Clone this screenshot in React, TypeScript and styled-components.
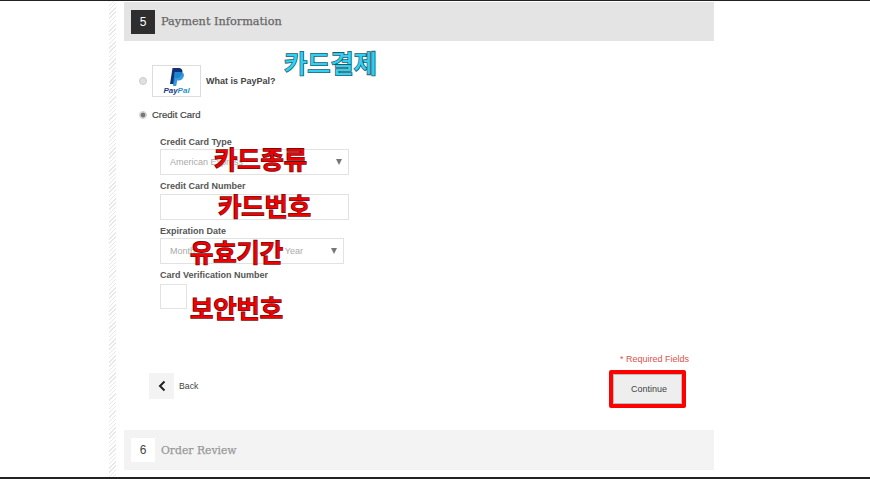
import styled, { createGlobalStyle } from "styled-components";

const GlobalStyle = createGlobalStyle`
  html, body {
    margin: 0;
    padding: 0;
    background: #fff;
  }
  body {
    font-family: "Liberation Sans", Arial, sans-serif;
    overflow: hidden;
  }
`;

const Page = styled.div`
  width: 870px;
  height: 479px;
  box-sizing: border-box;
  border-top: 1px solid #222;
  border-bottom: 2px solid #222;
  padding-left: 109px;
  display: flex;
  overflow: hidden;
`;

const Stripe = styled.div`
  width: 7px;
  margin-right: 8px;
  background: repeating-linear-gradient(135deg, #e8e8e8 0, #e8e8e8 1px, #fff 1px, #fff 3px);
`;

const Main = styled.main`
  position: relative;
  width: 590px;
  padding-top: 1px;
`;

const StepHeader = styled.div<{ $active?: boolean }>`
  height: ${({ $active }) => ($active ? 39 : 40)}px;
  box-sizing: border-box;
  padding-left: 7px;
  display: flex;
  align-items: center;
  gap: 6px;
  background: ${({ $active }) => ($active ? "#e4e4e4" : "#f3f3f3")};
`;

const StepNumber = styled.span<{ $active?: boolean }>`
  width: 24px;
  height: 24px;
  display: flex;
  align-items: center;
  justify-content: center;
  font-size: 12px;
  color: ${({ $active }) => ($active ? "#fff" : "#444")};
  background: ${({ $active }) => ($active ? "#2e2e2e" : "#fff")};
`;

const StepTitle = styled.span<{ $active?: boolean }>`
  font-family: "DejaVu Serif", serif;
  font-size: ${({ $active }) => ($active ? 11.3 : 10.8)}px;
  color: ${({ $active }) => ($active ? "#666" : "#999")};
  -webkit-text-stroke: 0.25px currentColor;
`;

const Body = styled.div`
  height: 389px;
  padding: 24px 0 0 15px;
  box-sizing: border-box;
`;

const PaymentRow = styled.div`
  display: flex;
  align-items: center;
  gap: 5px;
  font-size: 9px;
  font-weight: bold;
  color: #444;
`;

const CardRow = styled(PaymentRow)`
  margin-top: 12px;
  font-weight: normal;
  font-size: 9.5px;
  -webkit-text-stroke: 0.2px #444;
`;

const Radio = styled.span<{ $checked?: boolean }>`
  width: 6px;
  height: 6px;
  border-radius: 50%;
  border: 1px solid #ccc;
  background: ${({ $checked }) => ($checked ? "radial-gradient(circle, #777 0, #777 2px, #eee 3px)" : "#e0e0e0")};
`;

const LogoBox = styled.span`
  width: 47px;
  height: 30px;
  border: 1px solid #ddd;
  display: flex;
  flex-direction: column;
  align-items: center;
`;

const LogoText = styled.span`
  font-size: 8px;
  font-weight: bold;
  font-style: italic;
  line-height: 7px;
  margin-top: 1px;
  color: #1b3c80;
`;

const LogoTextLight = styled.span`
  color: #2a8fd0;
`;

const Form = styled.div`
  padding: 17px 0 0 21px;
`;

const FieldLabel = styled.label`
  display: block;
  font-size: 9px;
  line-height: 11px;
  font-weight: bold;
  color: #555;
  margin-bottom: 2px;
`;

const Field = styled.div`
  margin-bottom: 6px;
`;

const Select = styled.div<{ $width: number }>`
  width: ${({ $width }) => $width}px;
  height: 26px;
  margin: -1px 0 1px;
  box-sizing: border-box;
  border: 1px solid #e2e2e2;
  padding: 0 9px;
  display: flex;
  align-items: center;
  justify-content: space-between;
  font-size: 9px;
  color: #aaa;
`;

const Caret = styled.span`
  width: 0;
  height: 0;
  border-left: 3px solid transparent;
  border-right: 3px solid transparent;
  border-top: 6px solid #777;
  margin-right: -3px;
`;

const Input = styled.div<{ $width: number }>`
  width: ${({ $width }) => $width}px;
  height: 26px;
  box-sizing: border-box;
  border: 1px solid #e2e2e2;
`;

const ExpiryValues = styled.span`
  display: flex;
  width: 133px;
  justify-content: space-between;
`;

const CvvInput = styled(Input)`
  height: 25px;
  margin-top: 3px;
`;

const Required = styled.div`
  position: absolute;
  top: 353px;
  right: 25px;
  font-size: 9px;
  color: #d9534f;
`;

const Actions = styled.div`
  position: absolute;
  top: 369px;
  left: 25px;
  width: 537px;
  display: flex;
  align-items: flex-start;
  justify-content: space-between;
`;

const BackLink = styled.div`
  margin-top: 3px;
  display: flex;
  align-items: center;
  gap: 5px;
  font-size: 8.7px;
  color: #444;
`;

const BackButton = styled.span`
  width: 25px;
  height: 26px;
  display: flex;
  align-items: center;
  justify-content: center;
  background: #f3f3f3;
`;

const ContinueButton = styled.button`
  width: 77px;
  height: 38px;
  box-sizing: border-box;
  border: 4px solid #f00;
  border-radius: 2px;
  outline: none;
  background: #eee;
  box-shadow: inset 0 0 0 1px #bbb;
  font-family: "Liberation Sans", Arial, sans-serif;
  font-size: 9px;
  color: #444;
  padding: 0 0 0 3px;
`;

const Note = styled.span<{ $x: number; $y: number; $cyan?: boolean }>`
  position: absolute;
  left: ${({ $x }) => $x}px;
  top: ${({ $y }) => $y}px;
  font-family: "Noto Sans CJK KR", sans-serif;
  font-size: 25.3px;
  line-height: 30px;
  font-weight: 500;
  white-space: nowrap;
  color: ${({ $cyan }) => ($cyan ? "#2fd0f2" : "#f00000")};
  -webkit-text-stroke: 1.6px ${({ $cyan }) => ($cyan ? "#1d5a6a" : "#7a0a0a")};
  paint-order: stroke fill;
`;

function PayPalMark() {
  return (
    <svg width="14" height="18" viewBox="0 0 14 18" style={{ marginTop: 2 }}>
      <path d="M2.500 0H8c3.500 0 5 2 4.300 4.800C11.500 8.500 9 10 6.500 10H5L3.800 16H0z" fill="#12307a" />
      <path d="M4.500 4h5.500c3 0 4.500 1.500 3.800 4.300-.7 2.800-2.800 4.200-5.300 4.200H7.200L6.200 18H3z" fill="#1f8fd6" opacity="0.9" />
    </svg>
  );
}

export default function App() {
  return (
    <Page>
      <GlobalStyle />
      <Stripe />
      <Main>
        <StepHeader $active>
          <StepNumber $active>5</StepNumber>
          <StepTitle $active>Payment Information</StepTitle>
        </StepHeader>
        <Body>
          <PaymentRow>
            <Radio />
            <LogoBox>
              <PayPalMark />
              <LogoText>
                Pay<LogoTextLight>Pal</LogoTextLight>
              </LogoText>
            </LogoBox>
            What is PayPal?
          </PaymentRow>
          <CardRow>
            <Radio $checked />
            Credit Card
          </CardRow>
          <Form>
            <Field>
              <FieldLabel>Credit Card Type</FieldLabel>
              <Select $width={189}>
                American Express
                <Caret />
              </Select>
            </Field>
            <Field>
              <FieldLabel>Credit Card Number</FieldLabel>
              <Input $width={189} />
            </Field>
            <Field>
              <FieldLabel>Expiration Date</FieldLabel>
              <Select $width={184}>
                <ExpiryValues>
                  <span>Month</span>
                  <span>Year</span>
                </ExpiryValues>
                <Caret />
              </Select>
            </Field>
            <Field>
              <FieldLabel>Card Verification Number</FieldLabel>
              <CvvInput $width={27} />
            </Field>
          </Form>
        </Body>
        <StepHeader>
          <StepNumber>6</StepNumber>
          <StepTitle>Order Review</StepTitle>
        </StepHeader>

        <Required>* Required Fields</Required>
        <Actions>
          <BackLink>
            <BackButton>
              <svg width="10" height="12" viewBox="0 0 10 12">
                <path d="M7.500 1.500L3 6l4.500 4.500" fill="none" stroke="#222" strokeWidth="2" />
              </svg>
            </BackButton>
            Back
          </BackLink>
          <ContinueButton>Continue</ContinueButton>
        </Actions>

        <Note $cyan $x={160} $y={46}>카드결제</Note>
        <Note $x={90} $y={142}>카드종류</Note>
        <Note $x={94} $y={189}>카드번호</Note>
        <Note $x={66} $y={235}>유효기간</Note>
        <Note $x={66} $y={291}>보안번호</Note>
      </Main>
    </Page>
  );
}
